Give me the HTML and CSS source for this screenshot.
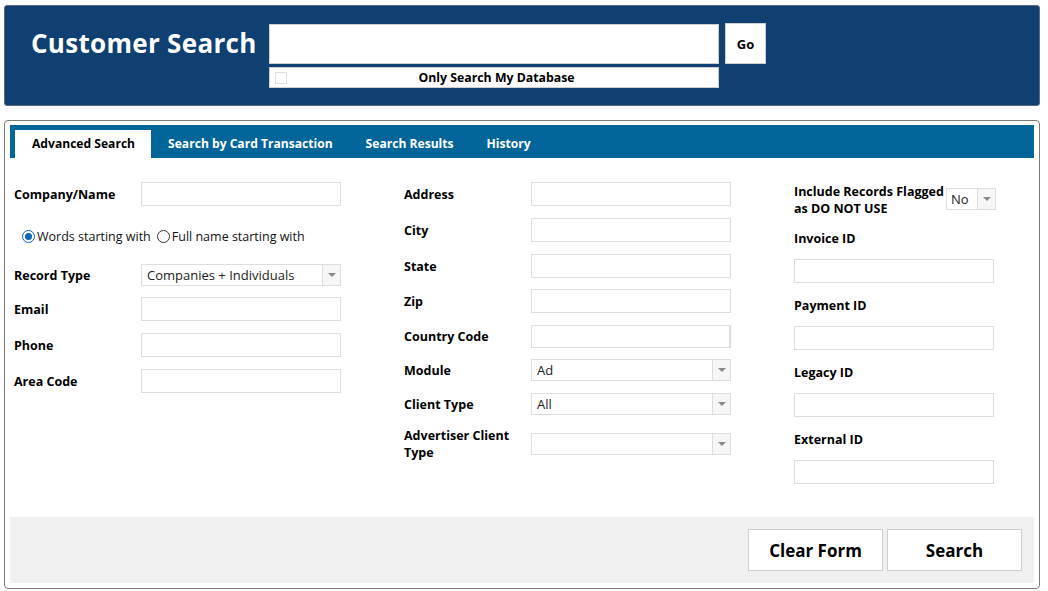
FILE: index.html
```html
<!DOCTYPE html>
<html>
<head>
<meta charset="utf-8">
<link rel="stylesheet" href="styles.css">
</head>
<body>
<div class="header">
  <h1 class="title">Customer Search</h1>
  <div class="search-group">
    <div class="search-row">
      <div class="search-input"></div>
      <div class="go-btn">Go</div>
    </div>
    <div class="db-row">
      <span class="check"></span>
      <span class="db-text">Only Search My Database</span>
    </div>
  </div>
</div>

<div class="panel">
  <div class="tabbar">
    <div class="tab active">Advanced Search</div>
    <div class="tab">Search by Card Transaction</div>
    <div class="tab">Search Results</div>
    <div class="tab">History</div>
  </div>
  <div class="form">
    <div class="col">
      <div class="row"><span class="label">Company/Name</span><span class="input"></span></div>
      <div class="radios">
        <span class="radio on"></span><span class="rtext">Words starting with</span>
        <span class="radio"></span><span class="rtext">Full name starting with</span>
      </div>
      <div class="row r-select"><span class="label">Record Type</span><span class="select"><span class="sval">Companies + Individuals</span><span class="arrow"></span></span></div>
      <div class="row r-after-select"><span class="label">Email</span><span class="input"></span></div>
      <div class="row"><span class="label">Phone</span><span class="input"></span></div>
      <div class="row"><span class="label">Area Code</span><span class="input"></span></div>
    </div>
    <div class="col">
      <div class="row"><span class="label">Address</span><span class="input"></span></div>
      <div class="row"><span class="label">City</span><span class="input"></span></div>
      <div class="row r-state"><span class="label">State</span><span class="input"></span></div>
      <div class="row"><span class="label">Zip</span><span class="input"></span></div>
      <div class="row r-country"><span class="label">Country Code</span><span class="input country"></span></div>
      <div class="row r-sel2"><span class="label">Module</span><span class="select"><span class="sval">Ad</span><span class="arrow"></span></span></div>
      <div class="row r-sel2"><span class="label">Client Type</span><span class="select"><span class="sval">All</span><span class="arrow"></span></span></div>
      <div class="row r-adv"><span class="label two">Advertiser Client Type</span><span class="select"><span class="sval"></span><span class="arrow"></span></span></div>
    </div>
    <div class="col col3">
      <div class="flag-row">
        <span class="label flag">Include Records Flagged as DO NOT USE</span>
        <span class="select small"><span class="sval">No</span><span class="arrow"></span></span>
      </div>
      <div class="group first"><span class="label">Invoice ID</span><span class="input"></span></div>
      <div class="group"><span class="label">Payment ID</span><span class="input"></span></div>
      <div class="group"><span class="label">Legacy ID</span><span class="input"></span></div>
      <div class="group"><span class="label">External ID</span><span class="input"></span></div>
    </div>
  </div>
  <div class="footer">
    <div class="btn">Clear Form</div>
    <div class="btn">Search</div>
  </div>
</div>
</body>
</html>
```

FILE: styles.css
```css
* { box-sizing: border-box; }
html, body { margin: 0; padding: 0; background: #fff; }
body {
  padding: 5px 8px 0 4px;
  font-family: "Open Sans", "Noto Sans", "Liberation Sans", sans-serif;
  color: #000;
  font-size: 13px;
}
.header {
  height: 101px;
  background: #0f4071;
  border: 1px solid #5a6a7a;
  border-radius: 3px;
  display: flex;
  align-items: flex-start;
  padding: 17px 0 0 26px;
}
.title {
  margin: 0;
  color: #fff;
  font-size: 26px;
  font-weight: 700;
  line-height: 40px;
  width: 238px;
  white-space: nowrap;
  letter-spacing: 0.3px;
}
.search-group { display: flex; flex-direction: column; }
.search-row { display: flex; align-items: flex-end; }
.search-input {
  width: 450px; height: 40px; background: #fff; border: 1px solid #cfcfcf;
}
.go-btn {
  width: 41px; height: 41px; margin-left: 6px; background: #fff; border: 1px solid #cfcfcf;
  display: flex; align-items: center; justify-content: center;
  font-weight: 700; font-size: 13px;
}
.db-row {
  margin-top: 3px; width: 450px; height: 21px; background: #fff; border: 1px solid #cfcfcf;
  display: flex; align-items: center; position: relative;
}
.check {
  width: 12px; height: 12px; border: 1px solid #ddd; margin-left: 5px; flex: none;
}
.db-text {
  flex: 1; text-align: center; font-weight: 700; font-size: 12.3px; padding-right: 12px;
}
.panel {
  margin-top: 14px;
  height: 469px;
  border: 1px solid #7a7a7a;
  border-radius: 4px;
  padding: 4px 5px 5px;
  display: flex;
  flex-direction: column;
}
.tabbar {
  height: 33px; background: #03659a; display: flex; align-items: flex-end; padding-left: 5px;
}
.tab {
  height: 28px; line-height: 28px; padding: 0 16px 0 17px; color: #fff; font-weight: 700; font-size: 12.1px;
  white-space: nowrap;
}
.tab.active { background: #fff; color: #000; }
.form {
  display: grid;
  grid-template-columns: 390px 390px 1fr;
  padding: 24px 0 0 4px;
}
.row { display: flex; align-items: center; height: 24px; margin-bottom: 12px; }
.label { width: 127px; flex: none; font-weight: 700; font-size: 12.5px; line-height: 17px; }
.input { width: 200px; height: 24px; border: 1px solid #ddd; background: #fff; display: block; }
.radios { display: flex; align-items: center; height: 24px; margin: 18px 0 16px 8px; font-size: 12.5px; color: #111; }
.radio {
  width: 13px; height: 13px; border-radius: 50%; border: 1px solid #333; flex: none; margin-right: 2px; position: relative;
}
.radio.on { border-color: #0a66c2; }
.radio.on::after {
  content: ""; position: absolute; left: 2px; top: 2px; width: 7px; height: 7px; border-radius: 50%; background: #0a66c2;
}
.rtext { margin-right: 6px; }
.select {
  width: 200px; height: 22px; border: 1px solid #ddd; display: flex; background: #fff;
}
.sval { flex: 1; padding-left: 5px; font-size: 13px; line-height: 20px; color: #222; }
.arrow {
  width: 18px; border-left: 1px solid #ddd; background: #f6f6f6; position: relative; flex: none;
}
.arrow::after {
  content: ""; position: absolute; left: 5px; top: 8px;
  border-left: 4px solid transparent; border-right: 4px solid transparent; border-top: 4px solid #888;
}
.r-select { height: 22px; margin-bottom: 11px; }
.r-state { margin-bottom: 11px; }
.r-country { height: 23px; margin-bottom: 11px; }
.r-country .input { height: 23px; border-right: 2px solid #ddd; }
.r-sel2 { height: 22px; margin-bottom: 12px; }
.r-adv { height: 34px; margin-top: 6px; }
.r-adv .label { line-height: 17px; }
.col3 { display: flex; flex-direction: column; }
.flag-row { display: flex; align-items: flex-start; height: 48px; }
.label.flag { width: 152px; margin-top: 1px; }
.select.small { width: 50px; height: 22px; margin-top: 6px; }
.select.small .sval { padding-left: 4px; }
.group { display: flex; flex-direction: column; }
.group .label { width: auto; }
.group .input { margin-top: 12px; margin-bottom: 14px; }
.footer {
  margin-top: auto;
  height: 66px; background: #f0f0f0;
  display: flex; justify-content: flex-end; align-items: center; padding-right: 12px; gap: 4px;
}
.btn {
  width: 135px; height: 42px; background: #fff; border: 1px solid #cfcfcf;
  display: flex; align-items: center; justify-content: center;
  font-weight: 700; font-size: 17px;
}
```
